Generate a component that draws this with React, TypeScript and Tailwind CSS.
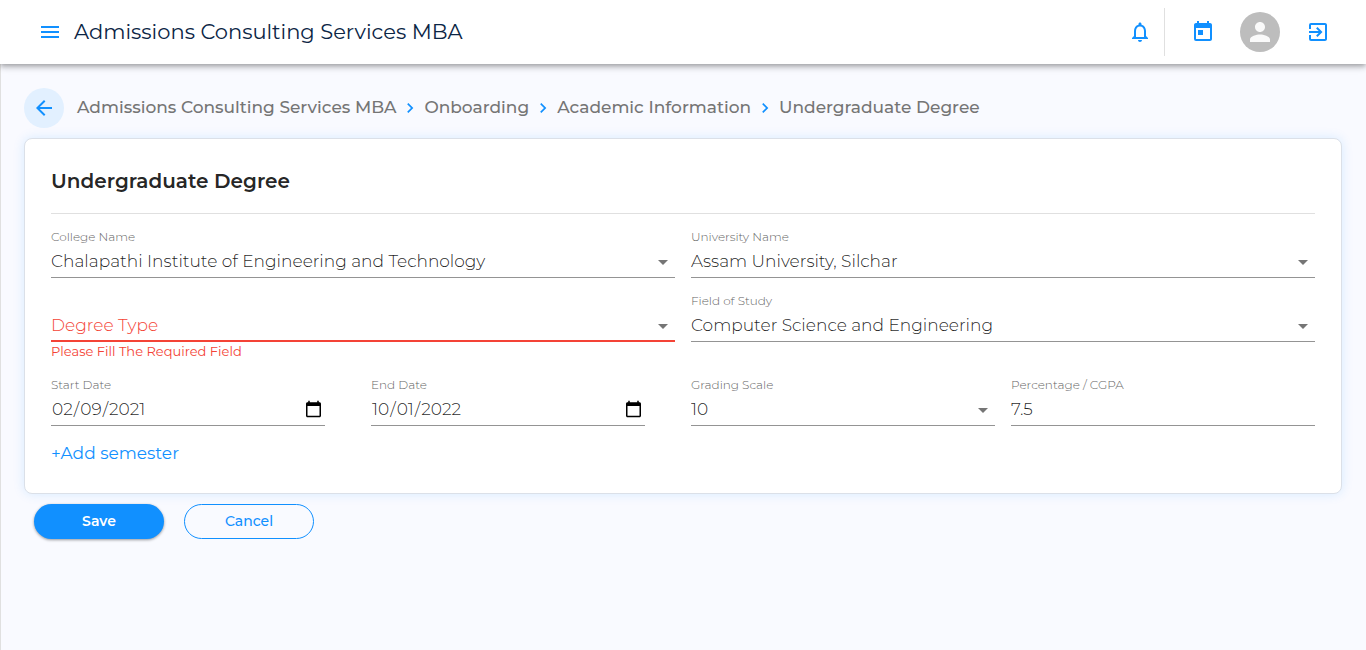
import { useState, type ReactNode } from "react";
import {
  MdArrowBack,
  MdArrowDropDown,
  MdChevronRight,
  MdExitToApp,
  MdMenu,
  MdNotificationsNone,
  MdPerson,
  MdToday,
} from "react-icons/md";

const labelClass = "block h-4 text-xs leading-[14px] font-light text-[#666666]";
const controlClass =
  "h-[31px] w-full appearance-none rounded-none bg-transparent text-[17px] font-light text-black/87 outline-none";

function Field({ id, label, narrow, children }: { id: string; label: string; narrow?: boolean; children: ReactNode }) {
  return (
    <div className={narrow ? "mr-[30px]" : ""}>
      <label htmlFor={id} className={labelClass}>
        {label}
      </label>
      <div className="relative flex h-8 border-b border-[#949494]">{children}</div>
    </div>
  );
}

function Arrow() {
  return <MdArrowDropDown className="pointer-events-none absolute top-1 right-0 size-6 text-[#757575]" />;
}

function SelectField({ id, label, options }: { id: string; label: string; options: string[] }) {
  return (
    <Field id={id} label={label}>
      <select id={id} className={controlClass}>
        {options.map((o) => (
          <option key={o}>{o}</option>
        ))}
      </select>
      <Arrow />
    </Field>
  );
}

function DateField({ id, label, initial }: { id: string; label: string; initial: string }) {
  const [value, setValue] = useState(initial);
  return (
    <Field id={id} label={label} narrow>
      <input
        id={id}
        type="date"
        value={value}
        onChange={(e) => setValue(e.target.value)}
        className={`${controlClass} pr-0.5 [&::-webkit-calendar-picker-indicator]:size-[19px] [&::-webkit-calendar-picker-indicator]:p-0`}
      />
    </Field>
  );
}

const crumbs = ["Admissions Consulting Services MBA", "Onboarding", "Academic Information", "Undergraduate Degree"];

export default function App() {
  return (
    <div className="flex min-h-screen flex-col bg-[#f9faff] font-['Montserrat','Inter',sans-serif] text-black/87">
      <header className="relative flex h-16 items-center bg-white pr-9 pl-[38px] text-[#1190ff] shadow-[0_2px_4px_-1px_rgba(0,0,0,0.2),0_4px_5px_0_rgba(0,0,0,0.14),0_1px_10px_0_rgba(0,0,0,0.12)]">
        <button type="button" aria-label="Open menu">
          <MdMenu className="size-6" />
        </button>
        <h1 className="ml-3 text-[21px] leading-8 text-[#0b2545]">Admissions Consulting Services MBA</h1>
        <div className="ml-auto flex items-center">
          <button type="button" aria-label="Notifications" className="mr-3">
            <MdNotificationsNone className="size-6" />
          </button>
          <div className="h-12 w-px bg-[#e0e0e0]" />
          <button type="button" aria-label="Calendar" className="ml-[26px]">
            <MdToday className="size-6" />
          </button>
          <button
            type="button"
            aria-label="Profile"
            className="ml-[25px] flex size-10 items-center justify-center rounded-full bg-[#bdbdbd] text-[#fafafa]"
          >
            <MdPerson className="size-[30px]" />
          </button>
          <button type="button" aria-label="Sign out" className="ml-[26px]">
            <MdExitToApp className="size-6" />
          </button>
        </div>
      </header>

      <main className="flex-1 border-l border-[#e0e0e0] pt-6 pr-6 pl-[23px]">
        <nav aria-label="Breadcrumb" className="flex items-center">
          <button
            type="button"
            aria-label="Back"
            className="mr-[13px] flex size-10 items-center justify-center rounded-full bg-[#e2f0ff] text-[#1190ff]"
          >
            <MdArrowBack className="size-6" />
          </button>
          <ol className="flex items-center font-medium text-[#757575]">
            {crumbs.map((c, i) => (
              <li key={c} className="flex items-center">
                {i > 0 && <MdChevronRight className="mx-1 size-5 text-[#1190ff]" />}
                <a href="#" className="pb-0.5 text-[17px] leading-6">
                  {c}
                </a>
              </li>
            ))}
          </ol>
        </nav>

        <form onSubmit={(e) => e.preventDefault()}>
          <section className="mt-2.5 rounded-lg border border-[#dbe0e8] bg-white px-[26px] pt-[26px] pb-7 shadow-[0_0_12px_0_rgba(17,144,255,0.14)]">
            <h2 className="border-b border-[#e0e0e0] pb-4 text-xl leading-8 font-semibold">Undergraduate Degree</h2>
            <div className="mt-4 grid grid-cols-4 gap-4">
              <div className="col-span-2">
                <SelectField
                  id="college"
                  label="College Name"
                  options={["Chalapathi Institute of Engineering and Technology"]}
                />
              </div>
              <div className="col-span-2">
                <SelectField id="university" label="University Name" options={["Assam University, Silchar"]} />
              </div>
              <div className="col-span-2 pt-4">
                <div className="relative flex h-8 border-b-2 border-[#f44336]">
                  <select
                    aria-label="Degree Type"
                    aria-invalid="true"
                    aria-describedby="degree-error"
                    className="h-[31px] w-full appearance-none bg-transparent text-[17px] font-light text-[#f44336] outline-none"
                  >
                    <option>Degree Type</option>
                  </select>
                  <Arrow />
                </div>
                <p id="degree-error" className="pb-0.5 text-[13px] leading-[18px] text-[#f44336]">
                  Please Fill The Required Field
                </p>
              </div>
              <div className="col-span-2">
                <SelectField id="field" label="Field of Study" options={["Computer Science and Engineering"]} />
              </div>
              <DateField id="start" label="Start Date" initial="2021-02-09" />
              <DateField id="end" label="End Date" initial="2022-10-01" />
              <SelectField id="scale" label="Grading Scale" options={["10"]} />
              <Field id="score" label="Percentage / CGPA">
                <input id="score" type="text" defaultValue="7.5" className={`${controlClass} pb-0.5`} />
              </Field>
            </div>
            <button type="button" className="mt-[15px] block text-[17px] leading-6 text-[#1190ff]">
              +Add semester
            </button>
          </section>

          <div className="mt-2.5 ml-2.5 flex gap-5 text-sm">
            <button
              type="submit"
              className="h-[35px] w-[130px] rounded-full bg-[#1190ff] pb-0.5 font-semibold text-white shadow-[0_1px_3px_rgba(0,0,0,0.4)]"
            >
              Save
            </button>
            <button
              type="button"
              className="h-[35px] w-[130px] rounded-full border border-[#1190ff] pb-0.5 font-medium text-[#1190ff]"
            >
              Cancel
            </button>
          </div>
        </form>
      </main>
    </div>
  );
}
